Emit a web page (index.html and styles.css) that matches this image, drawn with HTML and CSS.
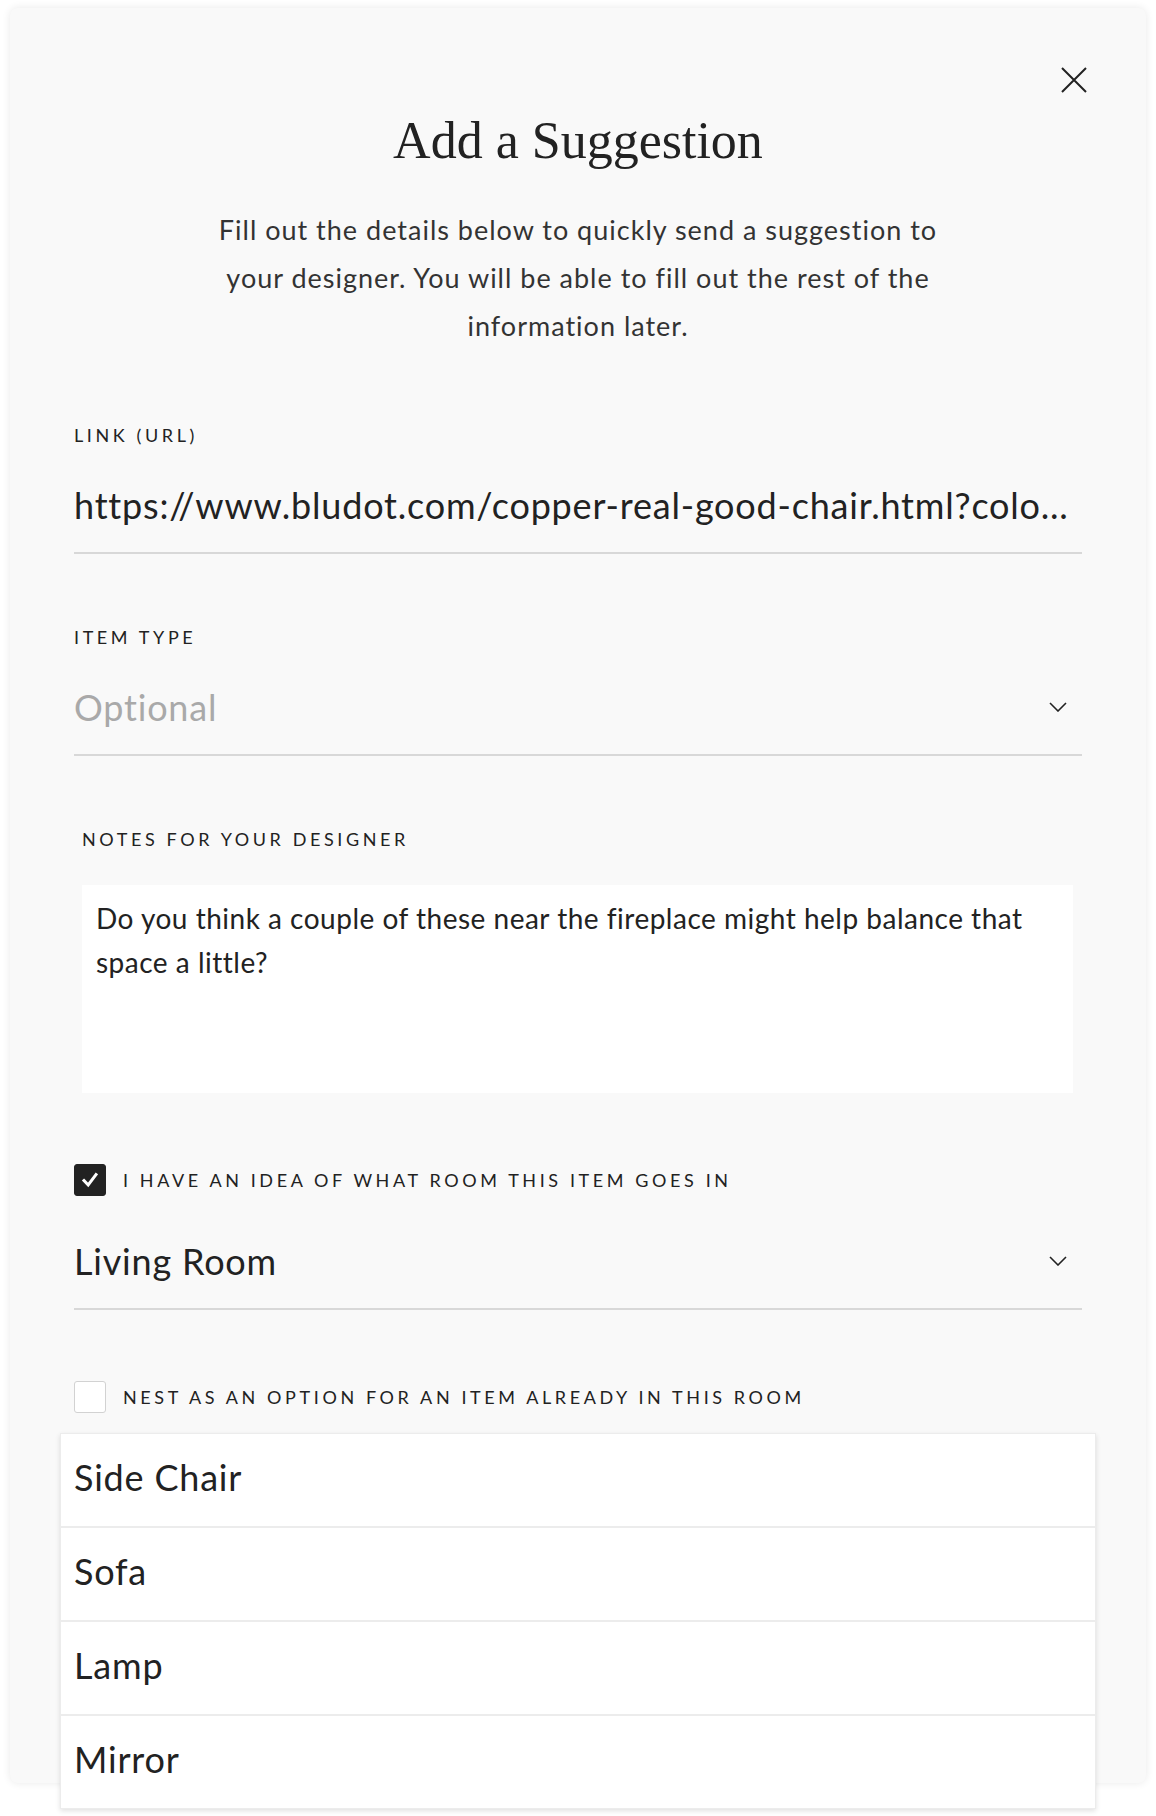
FILE: index.html
```html
<!DOCTYPE html>
<html lang="en">
<head>
<meta charset="utf-8">
<title>Add a Suggestion</title>
<link rel="stylesheet" href="styles.css">
</head>
<body>
<div class="modal">
  <button class="close" aria-label="Close">
    <svg width="26" height="26" viewBox="0 0 26 26"><path d="M1 1 L25 25 M25 1 L1 25" stroke="#222" stroke-width="2" fill="none"/></svg>
  </button>
  <h1 class="title">Add a Suggestion</h1>
  <p class="intro">Fill out the details below to quickly send a suggestion to your designer. You will be able to fill out the rest of the information later.</p>

  <div class="field">
    <div class="label">Link (URL)</div>
    <div class="line-input"><span class="value">https://www.bludot.com/copper-real-good-chair.html?colo…</span></div>
  </div>

  <div class="field">
    <div class="label">Item Type</div>
    <div class="line-input select"><span class="value placeholder">Optional</span>
      <svg class="chev" width="18" height="10" viewBox="0 0 18 10"><path d="M1 1 L9 9 L17 1" stroke="#222" stroke-width="1.6" fill="none"/></svg>
    </div>
  </div>

  <div class="field notes">
    <div class="label">Notes for your designer</div>
    <div class="textarea">Do you think a couple of these near the fireplace might help balance that space a little?</div>
  </div>

  <div class="check-row first">
    <span class="box checked">
      <svg width="20" height="20" viewBox="0 0 20 20"><path d="M4 10.5 L8.2 15 L16 4.5" stroke="#fff" stroke-width="3" fill="none" stroke-linecap="square"/></svg>
    </span>
    <span class="label">I have an idea of what room this item goes in</span>
  </div>

  <div class="line-input select room"><span class="value">Living Room</span>
    <svg class="chev" width="18" height="10" viewBox="0 0 18 10"><path d="M1 1 L9 9 L17 1" stroke="#222" stroke-width="1.6" fill="none"/></svg>
  </div>

  <div class="nest">
    <div class="check-row">
      <span class="box"></span>
      <span class="label">Nest as an option for an item already in this room</span>
    </div>
    <ul class="menu">
      <li>Side Chair</li>
      <li>Sofa</li>
      <li>Lamp</li>
      <li>Mirror</li>
    </ul>
  </div>
</div>
</body>
</html>
```
FILE: styles.css
```css
* { box-sizing: border-box; }
html, body { margin: 0; padding: 0; background: #ffffff; }
body {
  min-height: 1816px;
  font-family: Lato, "Noto Sans", sans-serif;
  color: #222;
}

.modal {
  position: relative;
  width: 1136px;
  height: 1775px;
  margin: 8px 0 0 10px;
  padding: 103px 64px 0;
  background: #f9f9f9;
  border-radius: 8px;
  box-shadow: 0 0 8px rgba(0,0,0,0.09);
}

.close {
  position: absolute;
  top: 59px;
  right: 59px;
  width: 26px;
  height: 26px;
  padding: 0;
  border: 0;
  background: none;
  display: block;
}
.close svg { display: block; }

.title {
  margin: 0;
  font-family: "Liberation Serif", "Times New Roman", serif;
  font-weight: 400;
  font-size: 52px;
  line-height: 60px;
  text-align: center;
  color: #222;
}

.intro {
  margin: 35px auto 0;
  max-width: 740px;
  font-size: 27px;
  letter-spacing: 1px;
  line-height: 48px;
  text-align: center;
  color: #333;
}

.label {
  font-size: 18px;
  line-height: 22px;
  letter-spacing: 3.6px;
  text-transform: uppercase;
  color: #222;
}

.field { margin-top: 74px; }
.field + .field { margin-top: 72px; }

.line-input {
  display: flex;
  align-items: center;
  margin-top: 37px;
  padding-bottom: 25px;
  border-bottom: 2px solid #d8d8d8;
}
.line-input .value {
  flex: 1;
  min-width: 0;
  font-size: 36px;
  letter-spacing: 0.8px;
  line-height: 44px;
  white-space: nowrap;
  overflow: hidden;
  color: #222;
}
.line-input .placeholder { color: #a9a9a9; }
.chev { margin-right: 15px; flex: none; }

.notes { padding: 0 9px 0 8px; }
.textarea {
  margin-top: 35px;
  height: 208px;
  padding: 11px 20px 0 14px;
  background: #ffffff;
  font-size: 28px;
  letter-spacing: 0.5px;
  line-height: 44px;
  color: #222;
}

.check-row {
  display: flex;
  align-items: center;
  gap: 17px;
  margin-top: 72px;
}
.check-row.first { margin-top: 71px; }
.box {
  width: 32px;
  height: 32px;
  flex: none;
  border-radius: 3px;
  border: 1.5px solid #d2d2d2;
  background: #fff;
  display: flex;
  align-items: center;
  justify-content: center;
}
.box.checked { background: #222; border-color: #222; }
.box svg { display: block; }

.room { margin-top: 43px; }

.nest { position: relative; }
.nest .check-row { margin-top: 71px; }

.menu {
  position: absolute;
  top: 52px;
  left: -14px;
  right: -14px;
  margin: 0;
  padding: 0;
  list-style: none;
  background: #fff;
  border: 1px solid #ececec;
  box-shadow: 0 2px 5px rgba(0,0,0,0.12);
}
.menu li {
  box-sizing: content-box;
  height: 86px;
  display: flex;
  align-items: center;
  padding: 0 13px 6px;
  font-size: 36px;
  letter-spacing: 0.8px;
  color: #222;
}
.menu li + li { border-top: 2px solid #ececec; }
```
